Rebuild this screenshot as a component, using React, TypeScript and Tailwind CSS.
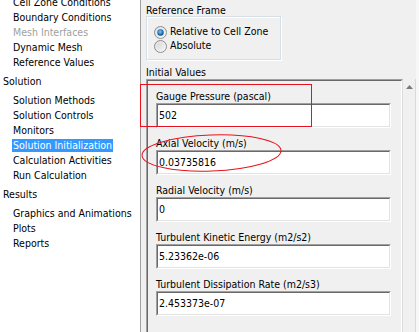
import React from 'react'

type NavEntry = {
  label: string
  header?: boolean
  disabled?: boolean
  selected?: boolean
}

const navEntries: NavEntry[] = [
  { label: 'Cell Zone Conditions' },
  { label: 'Boundary Conditions' },
  { label: 'Mesh Interfaces', disabled: true },
  { label: 'Dynamic Mesh' },
  { label: 'Reference Values' },
  { label: 'Solution', header: true },
  { label: 'Solution Methods' },
  { label: 'Solution Controls' },
  { label: 'Monitors' },
  { label: 'Solution Initialization', selected: true },
  { label: 'Calculation Activities' },
  { label: 'Run Calculation' },
  { label: 'Results', header: true },
  { label: 'Graphics and Animations' },
  { label: 'Plots' },
  { label: 'Reports' },
]

const fields = [
  { label: 'Gauge Pressure (pascal)', value: '502' },
  { label: 'Axial Velocity (m/s)', value: '0.03735816' },
  { label: 'Radial Velocity (m/s)', value: '0' },
  { label: 'Turbulent Kinetic Energy (m2/s2)', value: '5.23362e-06' },
  { label: 'Turbulent Dissipation Rate (m2/s3)', value: '2.453373e-07' },
]

function Radio({ checked, id }: { checked?: boolean; id: string }) {
  return (
    <svg width="13" height="13" viewBox="0 0 13 13" className="shrink-0">
      <defs>
        <linearGradient id={`rb-${id}`} x1="0" y1="0" x2="1" y2="1">
          <stop offset="0" stopColor="#d0d0d0" />
          <stop offset="1" stopColor="#fbfbfb" />
        </linearGradient>
        <radialGradient id={`dot-${id}`} cx="0.45" cy="0.4" r="0.6">
          <stop offset="0" stopColor="#7cc8f8" />
          <stop offset="0.6" stopColor="#2d7fc6" />
          <stop offset="1" stopColor="#0d3f78" />
        </radialGradient>
      </defs>
      <circle cx="6.5" cy="6.5" r="6" fill={`url(#rb-${id})`} stroke="#8e8f8f" />
      <circle cx="6.5" cy="6.5" r="4.5" fill="none" stroke="#f4f4f4" strokeOpacity="0.7" />
      {checked ? <circle cx="6.5" cy="6.5" r="3.2" fill={`url(#dot-${id})`} /> : null}
    </svg>
  )
}

function Field({ label, value }: { label: string; value: string }) {
  return (
    <div className="flex shrink-0 flex-col">
      <div className="h-[14px] whitespace-nowrap leading-[14px]">{label}</div>
      <div className="h-[25px] w-[235px] border border-t-[#a0a0a0] border-l-[#a0a0a0] border-r-white border-b-white">
        <div className="h-full border border-t-[#696969] border-l-[#696969] border-r-[#e3e3e3] border-b-[#e3e3e3] bg-white pl-[1px] leading-[21px]">
          {value}
        </div>
      </div>
    </div>
  )
}

export default function App() {
  return (
    <div className="relative flex h-[332px] w-[419px] overflow-hidden bg-[#f0f0f0] font-['DejaVu_Sans_Condensed','Liberation_Sans',sans-serif] text-[10.5px] text-black">
      {/* navigation tree */}
      <div className="w-[141px] shrink-0 border-r border-[#a0a0a0] bg-white">
        <div className="-mt-[5px]">
          {navEntries.map((entry) =>
            entry.header ? (
              <div key={entry.label} className="my-[4px] h-[15px] pl-[3px] leading-[15px]">
                {entry.label}
              </div>
            ) : (
              <div key={entry.label} className="flex h-[15px] items-center pl-[12px]">
                <span
                  className={
                    entry.selected
                      ? 'h-[13px] bg-[#3399ff] px-[1px] leading-[13px] whitespace-nowrap text-white'
                      : entry.disabled
                        ? 'px-[1px] whitespace-nowrap text-[#a0a0a0]'
                        : 'px-[1px] whitespace-nowrap'
                  }
                >
                  {entry.label}
                </span>
              </div>
            ),
          )}
        </div>
      </div>

      {/* task page */}
      <div className="flex flex-1">
        <div className="flex w-[275px] flex-col pl-[5px] pt-[4px]">
          <div className="h-[12px] shrink-0 leading-[12px]">Reference Frame</div>
          <div className="flex h-[44px] w-[135px] shrink-0 flex-col border border-[#d5dfe5] pt-[8px] pl-[7px] shadow-[inset_1px_1px_0_#fff,1px_1px_0_#fff]">
            <div className="flex h-[14px] items-center gap-[3px]">
              <Radio checked id="rel" />
              <span>Relative to Cell Zone</span>
            </div>
            <div className="flex h-[14px] items-center gap-[3px]">
              <Radio id="abs" />
              <span>Absolute</span>
            </div>
          </div>

          <div className="mt-[6px] h-[12px] shrink-0 leading-[12px]">Initial Values</div>
          <div className="mt-[1px] flex shrink-0">
            <div className="h-[270px] w-[257px] border border-t-[#a0a0a0] border-l-[#a0a0a0] border-r-[#dcdcdc] border-b-white">
              <div className="h-full border border-t-[#696969] border-l-[#696969] border-r-white border-b-[#e3e3e3]">
                <div className="flex flex-col gap-[8px] pt-[8px] pl-[8px]">
                  {fields.map((f) => (
                    <Field key={f.label} label={f.label} value={f.value} />
                  ))}
                </div>
              </div>
            </div>
            {/* scrollbar */}
            <div className="flex h-[270px] w-[13px] justify-center border-r border-[#d9d9d9] bg-[#f0f0f0] pt-[6px]">
              <svg width="7" height="4" viewBox="0 0 7 4">
                <path d="M0 4 L3.5 0 L7 4 Z" fill="#7a7a7a" />
              </svg>
            </div>
          </div>
        </div>
        <div className="flex-1 bg-[#f7f7f7]" />
      </div>

      {/* annotations */}
      <div className="absolute left-[140px] top-[84px] h-[43px] w-[172px] border border-[#e8121e]" />
      <svg className="absolute left-0 top-0" width="419" height="332">
        <ellipse
          cx="211.5"
          cy="153"
          rx="69.5"
          ry="18"
          fill="none"
          stroke="#e8121e"
          strokeWidth="1"
          transform="rotate(-2 211.5 153)"
        />
      </svg>
    </div>
  )
}
